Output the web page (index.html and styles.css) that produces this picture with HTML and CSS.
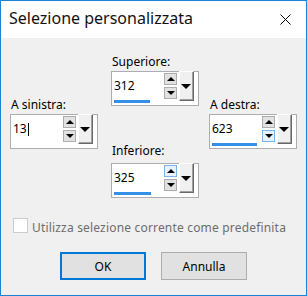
FILE: index.html
```html
<!DOCTYPE html>
<html lang="it">
<head>
  <meta charset="UTF-8" />
  <title>Selezione personalizzata</title>
  <link rel="stylesheet" href="styles.css">
</head>
<body>
  <div class="dialog">
    <!-- Title bar -->
    <div class="titlebar">
      <span class="title">Selezione personalizzata</span>
      <svg class="close" width="11" height="11" viewBox="0 0 11 11">
        <path d="M0.5 0.5 L10.5 10.5 M10.5 0.5 L0.5 10.5" stroke="#000" stroke-width="1" fill="none"/>
      </svg>
    </div>

    <div class="content">
      <div class="fields">
        <!-- Left -->
        <div class="col col-left">
          <div class="field">
            <div class="label">A sinistra:</div>
            <div class="spin">
              <div class="spin-main">
                <div class="value">13<span class="caret"></span></div>
              </div>
              <div class="arrows">
                <span class="arrow up"></span>
                <span class="arrow down"></span>
              </div>
              <span class="drop"></span>
            </div>
          </div>
        </div>

        <!-- Middle -->
        <div class="col col-mid">
          <div class="field">
            <div class="label">Superiore:</div>
            <div class="spin">
              <div class="spin-main">
                <div class="value">312</div>
                <div class="bar" style="width: 36px"></div>
              </div>
              <div class="arrows">
                <span class="arrow up"></span>
                <span class="arrow down"></span>
              </div>
              <span class="drop"></span>
            </div>
          </div>

          <div class="field field-bottom">
            <div class="label">Inferiore:</div>
            <div class="spin">
              <div class="spin-main">
                <div class="value">325</div>
                <div class="bar" style="width: 37px"></div>
              </div>
              <div class="arrows">
                <span class="arrow up hot"></span>
                <span class="arrow down"></span>
              </div>
              <span class="drop"></span>
            </div>
          </div>
        </div>

        <!-- Right -->
        <div class="col col-right">
          <div class="field">
            <div class="label">A destra:</div>
            <div class="spin">
              <div class="spin-main">
                <div class="value">623</div>
                <div class="bar" style="width: 45px"></div>
              </div>
              <div class="arrows">
                <span class="arrow up"></span>
                <span class="arrow down hot"></span>
              </div>
              <span class="drop"></span>
            </div>
          </div>
        </div>
      </div>

      <!-- Default checkbox (disabled) -->
      <div class="check">
        <span class="check-box"></span>
        <span class="check-text">Utilizza selezione corrente come predefinita</span>
      </div>

      <!-- Buttons -->
      <div class="actions">
        <button class="btn btn-default">OK</button>
        <button class="btn">Annulla</button>
      </div>
    </div>
  </div>
</body>
</html>
```

FILE: styles.css
```css
body {
  margin: 0;
  padding: 0;
  font-family: 'Noto Sans', 'Open Sans', sans-serif;
  font-size: 12px;
  color: #000;
  background: #f0f0f0;
}

.dialog {
  width: 307px;
  height: 296px;
  box-sizing: border-box;
  border: 1px solid #1883d7;
  background: #f0f0f0;
  display: flex;
  flex-direction: column;
}

/* Title bar */
.titlebar {
  height: 37px;
  flex: none;
  background: #fff;
  display: flex;
  align-items: flex-start;
  justify-content: space-between;
  padding: 0 15px 0 8px;
}

.title {
  margin-top: 7px;
  font-size: 16px;
  line-height: 21px;
  color: #111;
}

.close {
  margin-top: 13px;
}

/* Fields */
.content {
  flex: 1;
  padding: 16px 0 0 9px;
}

.fields {
  display: flex;
  align-items: flex-start;
}

.col-left,
.col-right {
  margin-top: 43px;
}

.col-mid {
  margin: 0 10px 0 13px;
}

.field-bottom {
  margin-top: 37px;
}

.label {
  line-height: 16px;
  margin-bottom: 1px;
  padding-left: 1px;
}

.field-bottom .label {
  margin-bottom: 4px;
}

.spin {
  width: 88px;
  height: 35px;
  box-sizing: border-box;
  border: 1px solid #abadb3;
  background: #fff;
  display: flex;
  align-items: flex-start;
}

.spin-main {
  flex: 1;
  padding: 6px 0 0 2px;
  display: flex;
  flex-direction: column;
}

.value {
  line-height: 16px;
  display: flex;
  align-items: center;
}

.caret {
  width: 1px;
  height: 13px;
  background: #000;
  margin-left: 1px;
}

.bar {
  height: 3px;
  margin-top: 6px;
  background: #3390e8;
}

.arrows {
  display: flex;
  flex-direction: column;
  gap: 2px;
  margin-top: 1px;
}

.arrow {
  width: 13px;
  height: 12px;
  box-sizing: border-box;
  border: 1px solid #adadad;
  background: #e1e1e1;
  display: flex;
  align-items: center;
  justify-content: center;
}

.arrow.hot {
  border-color: #7eb4ea;
  background: #e5f1fb;
}

.arrow::after {
  content: "";
  width: 0;
  height: 0;
  border-left: 4px solid transparent;
  border-right: 4px solid transparent;
}

.arrow.up::after {
  border-bottom: 4px solid #000;
}

.arrow.down::after {
  border-top: 4px solid #000;
}

.drop {
  width: 15px;
  height: 30px;
  box-sizing: border-box;
  margin: -1px 4px 0 2px;
  border: 1px solid;
  border-color: #fff #696969 #696969 #fff;
  box-shadow: inset -1px -1px #a0a0a0;
  background: #f0f0f0;
  display: flex;
  align-items: center;
  justify-content: center;
}

.drop::after {
  content: "";
  width: 0;
  height: 0;
  border-left: 5px solid transparent;
  border-right: 5px solid transparent;
  border-top: 5px solid #000;
  margin-right: 1px;
}

/* Checkbox */
.check {
  display: flex;
  align-items: flex-start;
  margin-top: 20px;
  margin-left: 3px;
}

.check-box {
  width: 15px;
  height: 15px;
  box-sizing: border-box;
  border: 1px solid #cccccc;
  background: #fff;
  margin-right: 4px;
}

.check-text {
  line-height: 16px;
  padding-top: 2px;
  letter-spacing: 0.18px;
  color: #6d6d6d;
}

/* Buttons */
.actions {
  display: flex;
  justify-content: center;
  gap: 15px;
  margin-top: 16px;
  margin-left: -9px;
}

.btn {
  width: 86px;
  height: 28px;
  box-sizing: border-box;
  font-family: inherit;
  font-size: 12px;
  color: #000;
  background: #e1e1e1;
  border: 1px solid #adadad;
  padding: 0;
}

.btn-default {
  border: 2px solid #0078d7;
}
```
